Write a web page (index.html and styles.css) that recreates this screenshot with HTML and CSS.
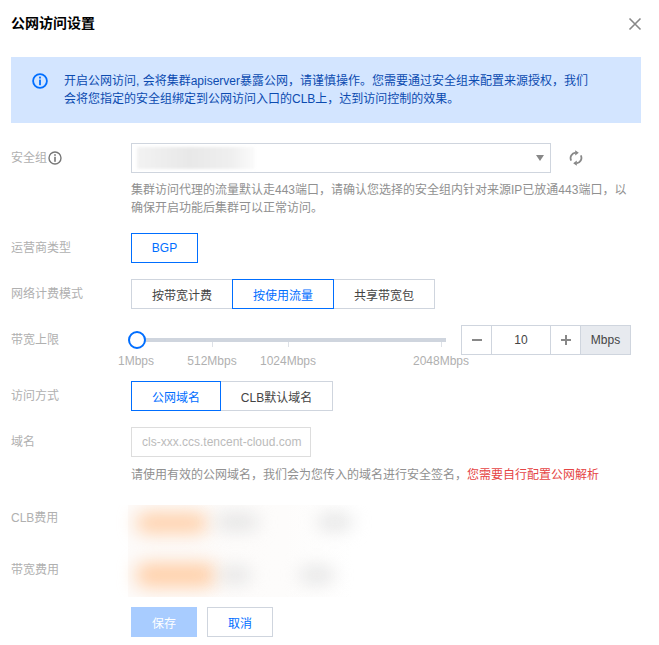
FILE: index.html
```html
<!DOCTYPE html>
<html lang="zh-CN">
<head>
<meta charset="utf-8">
<title>公网访问设置</title>
<link rel="stylesheet" href="styles.css">
</head>
<body>
<div class="dialog">
  <header class="head">
    <h1 class="title">公网访问设置</h1>
    <svg class="close" viewBox="0 0 14 14" width="14" height="14"><path d="M1.5 1.5l11 11M12.5 1.5l-11 11"/></svg>
  </header>
  <div class="alert">
    <svg class="alert-icon" viewBox="0 0 16 16" width="16" height="16"><circle cx="8" cy="8" r="6.9"/><rect class="fill" x="7.1" y="3.6" width="1.8" height="1.9"/><rect class="fill" x="7.1" y="6.6" width="1.8" height="5.6"/></svg>
    <p class="alert-text">开启公网访问, 会将集群apiserver暴露公网，请谨慎操作。您需要通过安全组来配置来源授权，我们<br>会将您指定的安全组绑定到公网访问入口的CLB上，达到访问控制的效果。</p>
  </div>

  <div class="row first">
    <div class="label">安全组<svg class="label-icon" viewBox="0 0 14 14" width="14" height="14"><circle cx="7" cy="7" r="6"/><rect class="fill" x="6.2" y="3.2" width="1.6" height="1.6"/><rect class="fill" x="6.2" y="5.8" width="1.6" height="5"/></svg></div>
    <div class="field">
      <div class="select-line">
        <div class="select"><span class="select-blur"></span><span class="caret"></span></div>
        <svg class="refresh" viewBox="0 0 14 16" width="14" height="16"><path class="arc" d="M2.2 10.6A5.4 5.4 0 0 1 6.6 2.7M11.8 5.4A5.4 5.4 0 0 1 7.4 13.3"/><path class="fill" d="M6.2 0.2l3.6 2.6-3.6 2.6zM7.8 10.6l-3.6 2.6 3.6 2.6z"/></svg>
      </div>
      <p class="help">集群访问代理的流量默认走443端口，请确认您选择的安全组内针对来源IP已放通443端口，以<br>确保开启功能后集群可以正常访问。</p>
    </div>
  </div>

  <div class="row">
    <div class="label">运营商类型</div>
    <div class="field seg"><button class="opt on w67">BGP</button></div>
  </div>

  <div class="row">
    <div class="label">网络计费模式</div>
    <div class="field seg">
      <button class="opt w102">按带宽计费</button>
      <button class="opt on w102">按使用流量</button>
      <button class="opt w102">共享带宽包</button>
    </div>
  </div>

  <div class="row slider-row">
    <div class="label">带宽上限</div>
    <div class="field slider-line">
      <div class="slider">
        <div class="track"></div>
        <span class="thumb"></span>
        <span class="tick t512"></span><span class="tick t1024"></span><span class="tick t2048"></span>
        <span class="mark m1">1Mbps</span><span class="mark m512">512Mbps</span><span class="mark m1024">1024Mbps</span><span class="mark m2048">2048Mbps</span>
      </div>
      <div class="stepper">
        <span class="step"><svg viewBox="0 0 12 12" width="12" height="12"><path d="M1 6h10"/></svg></span>
        <span class="num">10</span>
        <span class="step"><svg viewBox="0 0 12 12" width="12" height="12"><path d="M1 6h10M6 1v10"/></svg></span>
        <span class="unit">Mbps</span>
      </div>
    </div>
  </div>

  <div class="row">
    <div class="label">访问方式</div>
    <div class="field seg">
      <button class="opt on w90">公网域名</button>
      <button class="opt w112">CLB默认域名</button>
    </div>
  </div>

  <div class="row">
    <div class="label">域名</div>
    <div class="field">
      <div class="domain">cls-xxx.ccs.tencent-cloud.com</div>
      <p class="hint">请使用有效的公网域名，我们会为您传入的域名进行安全签名，<span class="red">您需要自行配置公网解析</span></p>
    </div>
  </div>

  <div class="fees">
    <div class="fee-row">
      <div class="label">CLB费用</div>
      <div class="fee-blur"><span class="b orange o1"></span><span class="b grey g1"></span><span class="b grey g2"></span></div>
    </div>
    <div class="fee-row">
      <div class="label">带宽费用</div>
      <div class="fee-blur"><span class="b orange o2"></span><span class="b grey g3"></span><span class="b grey g4"></span></div>
    </div>
  </div>

  <div class="actions">
    <button class="btn save">保存</button>
    <button class="btn cancel">取消</button>
  </div>
</div>
</body>
</html>
```

FILE: styles.css
```css
* { box-sizing: border-box; }
html, body { margin: 0; padding: 0; background: #fff; }
body {
  width: 659px;
  height: 645px;
  overflow: hidden;
  font-family: "Liberation Sans", "Noto Sans CJK SC", sans-serif;
  font-size: 12px;
  color: #444;
}
p { margin: 0; }
.dialog { padding: 0 18px 0 11px; }
.head { height: 57px; display: flex; justify-content: space-between; }
.title { margin: 14px 0 0; font-size: 14px; line-height: 18px; font-weight: 700; color: #000; }
.close { margin: 17px -1px 0 0; }
.close path { fill: none; stroke: #888; stroke-width: 1.6; }

.alert {
  height: 66px;
  background: #d3e5ff;
  padding: 15px 0 0 21px;
  display: flex;
}
.alert-icon { margin: 1px 16px 0 0; flex: none; }
.alert-icon circle { fill: none; stroke: #006eff; stroke-width: 1.8; }
.alert-icon .fill { fill: #006eff; }
.alert-text { line-height: 18px; color: #0b4bb0; white-space: nowrap; }

.row { display: flex; margin-top: 16px; }
.row.first { margin-top: 20px; }
.label {
  width: 120px;
  flex: none;
  height: 30px;
  line-height: 30px;
  color: #b0b0b0;
  display: flex;
  align-items: center;
}
.label-icon { margin-left: 1px; }
.label-icon circle { fill: none; stroke: #777; stroke-width: 1.4; }
.label-icon .fill { fill: #777; }
.field { flex: 1; min-width: 0; }

.select-line { display: flex; align-items: center; }
.select {
  width: 420px;
  height: 30px;
  border: 1px solid #cfd5de;
  display: flex;
  justify-content: space-between;
  align-items: center;
  padding: 0 6px 0 5px;
}
.select-blur {
  width: 118px;
  height: 22px;
  background: linear-gradient(90deg, #f2f2f2, #e8e8e8 45%, #efefef 80%, #fbfbfb);
  filter: blur(1.5px);
}
.caret {
  width: 0;
  height: 0;
  border-left: 4.5px solid transparent;
  border-right: 4.5px solid transparent;
  border-top: 6px solid #888;
}
.refresh { margin-left: 18px; }
.refresh .arc { fill: none; stroke: #888; stroke-width: 1.8; }
.refresh .fill { fill: #888; }
.help { margin-top: 8px; line-height: 18px; color: #909090; white-space: nowrap; }

.seg { display: flex; }
button { font: inherit; margin: 0; background: #fff; }
.opt {
  height: 30px;
  padding: 0;
  border: 1px solid #cfd5de;
  color: #444;
  margin-left: -1px;
  position: relative;
}
.opt:first-child { margin-left: 0; }
.opt.on { border-color: #006eff; color: #006eff; z-index: 1; }
.w67 { width: 67px; }
.w102 { width: 102px; }
.w90 { width: 90px; }
.w112 { width: 113px; }

.slider-row { height: 40px; }
.slider-line { display: flex; }
.slider { width: 330px; height: 40px; position: relative; }
.track { position: absolute; left: 6px; width: 309px; top: 13px; height: 4px; background: #cfd5de; }
.thumb {
  position: absolute;
  left: -3px;
  top: 6px;
  width: 18px;
  height: 18px;
  border: 2px solid #006eff;
  border-radius: 50%;
  background: #fff;
}
.tick { position: absolute; top: 17px; width: 1px; height: 5px; background: #dde1e7; }
.t512 { left: 81px; }
.t1024 { left: 157px; }
.t2048 { left: 310px; }
.mark { position: absolute; top: 29px; line-height: 14px; color: #b0b0b0; transform: translateX(-50%); white-space: nowrap; }
.m1 { left: 5px; }
.m512 { left: 81px; }
.m1024 { left: 157px; }
.m2048 { left: 310px; }

.stepper { display: flex; height: 30px; border: 1px solid #cfd5de; width: 170px; }
.step { width: 29px; flex: none; display: flex; align-items: center; justify-content: center; }
.step path { fill: none; stroke: #888; stroke-width: 2; }
.num {
  width: 60px;
  flex: none;
  border-left: 1px solid #cfd5de;
  border-right: 1px solid #cfd5de;
  text-align: center;
  line-height: 28px;
  color: #444;
}
.unit {
  flex: 1;
  border-left: 1px solid #cfd5de;
  background: #e7eaef;
  text-align: center;
  line-height: 29px;
  color: #444;
}

.domain {
  width: 180px;
  height: 30px;
  border: 1px solid #dddddd;
  padding-left: 10px;
  line-height: 28px;
  color: #bbb;
  overflow: hidden;
  white-space: nowrap;
}
.hint { margin-top: 9px; line-height: 18px; color: #909090; white-space: nowrap; }
.red { color: #e54545; }

.fees { margin-top: 21px; height: 92px; display: flex; flex-direction: column; position: relative; overflow: hidden; }
.fees::before {
  content: "";
  position: absolute;
  left: 117px;
  top: 0;
  width: 225px;
  height: 92px;
  background: linear-gradient(90deg, #fdfbfa, #fdfcfb 70%, #fff);
}
.fee-row { display: flex; height: 46px; position: relative; }
.fee-row .label { margin-top: -2px; }
.fee-row + .fee-row .label { margin-top: 4px; }
.fee-blur { position: absolute; left: 117px; top: 0; width: 225px; height: 46px; }
.b { position: absolute; filter: blur(9px); border-radius: 10px; }
.orange { background: #ffcfa8; }
.grey { background: #e0e0e0; }
.o1 { left: 8px; top: 8px; width: 72px; height: 20px; }
.g1 { left: 88px; top: 10px; width: 42px; height: 14px; }
.g2 { left: 190px; top: 10px; width: 34px; height: 14px; }
.o2 { left: 8px; top: 12px; width: 80px; height: 24px; }
.g3 { left: 92px; top: 17px; width: 30px; height: 14px; }
.g4 { left: 172px; top: 17px; width: 34px; height: 14px; }

.actions { margin: 10px 0 0 120px; display: flex; gap: 10px; }
.btn { width: 66px; height: 30px; padding: 0; font-weight: 400; }
.save { background: #a8ccff; color: #fff; border: 0; }
.cancel { border: 1px solid #cfd5de; color: #006eff; }
```
